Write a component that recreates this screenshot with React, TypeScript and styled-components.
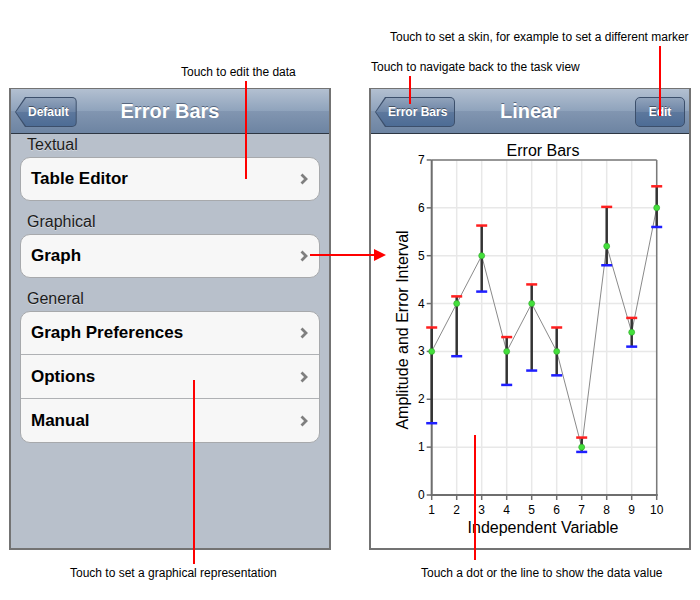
import React from 'react';
import styled, { createGlobalStyle } from 'styled-components';

const GlobalStyle = createGlobalStyle`
  html, body {
    margin: 0;
    padding: 0;
    background: #ffffff;
  }
  body {
    font-family: "Liberation Sans", Arial, Helvetica, sans-serif;
  }
`;

const Page = styled.div`
  position: relative;
  width: 700px;
  height: 600px;
  box-sizing: border-box;
  padding: 88px 0 0 9px;
  display: flex;
  align-items: flex-start;
  gap: 38px;
  background: #ffffff;
  overflow: hidden;
`;

const Phone = styled.div<{ $bg: string }>`
  width: 322px;
  height: 462px;
  box-sizing: border-box;
  border: 2px solid #737373;
  border-top-width: 1px;
  background: ${(props) => props.$bg};
  display: flex;
  flex-direction: column;
`;

const NavBar = styled.div`
  height: 44px;
  flex-shrink: 0;
  display: grid;
  grid-template-columns: 1fr auto 1fr;
  align-items: center;
  padding: 0 4px;
  background: linear-gradient(#b3c0d1 0%, #8fa3bc 50%, #8296b1 50%, #6d84a2 100%);
  border-bottom: 1px solid #2d3642;
`;

const NavTitle = styled.div`
  color: #ffffff;
  font-weight: bold;
  font-size: 20px;
  text-shadow: 0 -1px 0 rgba(40, 55, 80, 0.6);
  white-space: nowrap;
`;

const BackButton = styled.div`
  justify-self: start;
  height: 30px;
  margin-top: 2px;
  padding-left: 1px;
  background: #3c4f6b;
  clip-path: polygon(10px 0, 100% 0, 100% 100%, 10px 100%, 0 50%);
  border-radius: 0 5px 5px 0;
  display: flex;
`;

const BackInner = styled.div`
  margin: 1px 1px 1px 0;
  padding: 0 7px 0 12px;
  display: flex;
  align-items: center;
  background: linear-gradient(#91a3bb 0%, #6d85a6 50%, #5d789d 50%, #4d6c95 100%);
  clip-path: polygon(10px 0, 100% 0, 100% 100%, 10px 100%, 0 50%);
  border-radius: 0 4px 4px 0;
  color: #ffffff;
  font-weight: bold;
  font-size: 12px;
  text-shadow: 0 -1px 0 rgba(0, 0, 0, 0.45);
  white-space: nowrap;
`;

const EditButton = styled.div`
  justify-self: end;
  height: 28px;
  margin-top: 2px;
  width: 48px;
  display: flex;
  align-items: center;
  justify-content: center;
  border: 1px solid #3c4f6b;
  border-radius: 5px;
  background: linear-gradient(#91a3bb 0%, #6d85a6 50%, #5d789d 50%, #4d6c95 100%);
  color: #ffffff;
  font-weight: bold;
  font-size: 12px;
  text-shadow: 0 -1px 0 rgba(0, 0, 0, 0.45);
`;

const ListContent = styled.div`
  flex: 1;
  padding: 1px 9px 0;
  display: flex;
  flex-direction: column;
`;

const Section = styled.div`
  display: flex;
  flex-direction: column;
  & + & {
    margin-top: 11px;
  }
`;

const SectionHeader = styled.div`
  height: 20px;
  line-height: 20px;
  margin-bottom: 2px;
  padding-left: 7px;
  font-size: 16px;
  color: #1c1c1c;
  text-shadow: 0 1px 0 rgba(255, 255, 255, 0.4);
`;

const Group = styled.div`
  background: #f7f7f7;
  border: 1px solid #a7a9ac;
  border-radius: 10px;
  overflow: hidden;
`;

const Row = styled.div`
  height: 43px;
  display: flex;
  align-items: center;
  justify-content: space-between;
  padding: 0 11px 0 10px;
  &:first-child {
    height: 42px;
  }
  & + & {
    border-top: 1px solid #afb1b4;
  }
`;

const RowLabel = styled.span`
  font-size: 17px;
  font-weight: bold;
  color: #000000;
`;

const ChartContent = styled.div`
  flex: 1;
  background: #ffffff;
  display: flex;
`;

const Overlay = styled.svg`
  position: absolute;
  left: 0;
  top: 0;
  pointer-events: none;
`;

const Note = styled.div<{ $left: number; $top: number }>`
  position: absolute;
  left: ${(props) => props.$left}px;
  top: ${(props) => props.$top}px;
  font-size: 12px;
  line-height: 14px;
  color: #000000;
  white-space: nowrap;
`;

const Chevron = () => (
  <svg width="8" height="12" viewBox="0 0 8 12">
    <polyline points="1.5,1.5 6,6 1.5,10.5" fill="none" stroke="#7f7f7f" strokeWidth="2.8" />
  </svg>
);

const sections = [
  { title: 'Textual', rows: ['Table Editor'] },
  { title: 'Graphical', rows: ['Graph'] },
  { title: 'General', rows: ['Graph Preferences', 'Options', 'Manual'] },
];

const points = [
  { x: 1, y: 3, hi: 3.5, lo: 1.5 },
  { x: 2, y: 4, hi: 4.15, lo: 2.9 },
  { x: 3, y: 5, hi: 5.63, lo: 4.25 },
  { x: 4, y: 3, hi: 3.3, lo: 2.3 },
  { x: 5, y: 4, hi: 4.4, lo: 2.6 },
  { x: 6, y: 3, hi: 3.5, lo: 2.5 },
  { x: 7, y: 1, hi: 1.2, lo: 0.9 },
  { x: 8, y: 5.2, hi: 6.02, lo: 4.8 },
  { x: 9, y: 3.4, hi: 3.7, lo: 3.1 },
  { x: 10, y: 6, hi: 6.45, lo: 5.6 },
];

const px = (v: number) => 60.7 + (v - 1) * 25;
const py = (v: number) => 361 - v * 47.86;

const Chart = () => {
  const xs = [1, 2, 3, 4, 5, 6, 7, 8, 9, 10];
  const ys = [0, 1, 2, 3, 4, 5, 6, 7];
  const left = px(1);
  const right = px(10);
  const top = py(7);
  const bottom = py(0);
  const linePts = points.map((p) => `${px(p.x)},${py(p.y)}`).join(' ');

  return (
    <svg width="318" height="414" viewBox="0 0 318 414" fontFamily='"Liberation Sans", Arial, sans-serif'>
      <text x="172" y="22" fontSize="16" textAnchor="middle" fill="#000">Error Bars</text>
      {xs.map((v) => (
        <line key={`gx${v}`} x1={px(v)} y1={top} x2={px(v)} y2={bottom} stroke="#e8e8e8" strokeWidth="1.5" />
      ))}
      {ys.map((v) => (
        <line key={`gy${v}`} x1={left} y1={py(v)} x2={right} y2={py(v)} stroke="#e8e8e8" strokeWidth="1.5" />
      ))}
      <line x1={left} y1={top} x2={right} y2={top} stroke="#7a7a7a" strokeWidth="1.5" />
      <line x1={right} y1={top} x2={right} y2={bottom} stroke="#7a7a7a" strokeWidth="1.5" />
      <line x1={left} y1={top} x2={left} y2={bottom + 1} stroke="#6e6e6e" strokeWidth="2" />
      <line x1={left - 1} y1={bottom} x2={right + 1} y2={bottom} stroke="#6e6e6e" strokeWidth="2" />
      {ys.map((v) => (
        <g key={`ty${v}`}>
          <line x1={left - 5} y1={py(v)} x2={left} y2={py(v)} stroke="#6e6e6e" strokeWidth="1.5" />
          <text x={left - 7} y={py(v) + 4} fontSize="12" textAnchor="end" fill="#000">{v}</text>
        </g>
      ))}
      {xs.map((v) => (
        <g key={`tx${v}`}>
          <line x1={px(v)} y1={bottom} x2={px(v)} y2={bottom + 5} stroke="#6e6e6e" strokeWidth="1.5" />
          <text x={px(v)} y="380" fontSize="12" textAnchor="middle" fill="#000">{v}</text>
        </g>
      ))}
      <text x="172" y="399" fontSize="16" textAnchor="middle" fill="#000">Independent Variable</text>
      <text transform="translate(37,196) rotate(-90)" fontSize="16" textAnchor="middle" fill="#000">
        Amplitude and Error Interval
      </text>
      <polyline points={linePts} fill="none" stroke="#8a8a8a" strokeWidth="1" />
      {points.map((p) => (
        <g key={`e${p.x}`}>
          <line x1={px(p.x)} y1={py(p.lo)} x2={px(p.x)} y2={py(p.hi)} stroke="#333333" strokeWidth="2.5" />
          <line x1={px(p.x) - 5.5} y1={py(p.hi)} x2={px(p.x) + 5.5} y2={py(p.hi)} stroke="#ff1f1f" strokeWidth="2.5" />
          <line x1={px(p.x) - 5.5} y1={py(p.lo)} x2={px(p.x) + 5.5} y2={py(p.lo)} stroke="#1f1fff" strokeWidth="2.5" />
          <circle cx={px(p.x)} cy={py(p.y)} r="3" fill="#44e03c" stroke="#2fa52a" strokeWidth="0.6" />
        </g>
      ))}
    </svg>
  );
};

const App = () => (
  <>
    <GlobalStyle />
    <Page>
      <Phone $bg="#b8c0cb">
        <NavBar>
          <BackButton>
            <BackInner>Default</BackInner>
          </BackButton>
          <NavTitle>Error Bars</NavTitle>
          <span />
        </NavBar>
        <ListContent>
          {sections.map((s) => (
            <Section key={s.title}>
              <SectionHeader>{s.title}</SectionHeader>
              <Group>
                {s.rows.map((r) => (
                  <Row key={r}>
                    <RowLabel>{r}</RowLabel>
                    <Chevron />
                  </Row>
                ))}
              </Group>
            </Section>
          ))}
        </ListContent>
      </Phone>
      <Phone $bg="#ffffff">
        <NavBar>
          <BackButton>
            <BackInner>Error Bars</BackInner>
          </BackButton>
          <NavTitle>Linear</NavTitle>
          <EditButton>Edit</EditButton>
        </NavBar>
        <ChartContent>
          <Chart />
        </ChartContent>
      </Phone>

      <Overlay width="700" height="600" viewBox="0 0 700 600">
        <g stroke="#ff0000" strokeWidth="2">
          <line x1="246" y1="81" x2="246" y2="179" />
          <line x1="660" y1="46" x2="660" y2="116" />
          <line x1="410" y1="76" x2="410" y2="104" />
          <line x1="194" y1="380" x2="194" y2="564" />
          <line x1="475" y1="435" x2="475" y2="560" />
          <line x1="310" y1="255" x2="376" y2="255" />
        </g>
        <polygon points="374,249 386,255 374,261" fill="#ff0000" />
      </Overlay>
      <Note $left={390} $top={30}>Touch to set a skin, for example to set a different marker</Note>
      <Note $left={371} $top={60}>Touch to navigate back to the task view</Note>
      <Note $left={181} $top={65}>Touch to edit the data</Note>
      <Note $left={70} $top={566}>Touch to set a graphical representation</Note>
      <Note $left={421} $top={566}>Touch a dot or the line to show the data value</Note>
    </Page>
  </>
);

export default App;
